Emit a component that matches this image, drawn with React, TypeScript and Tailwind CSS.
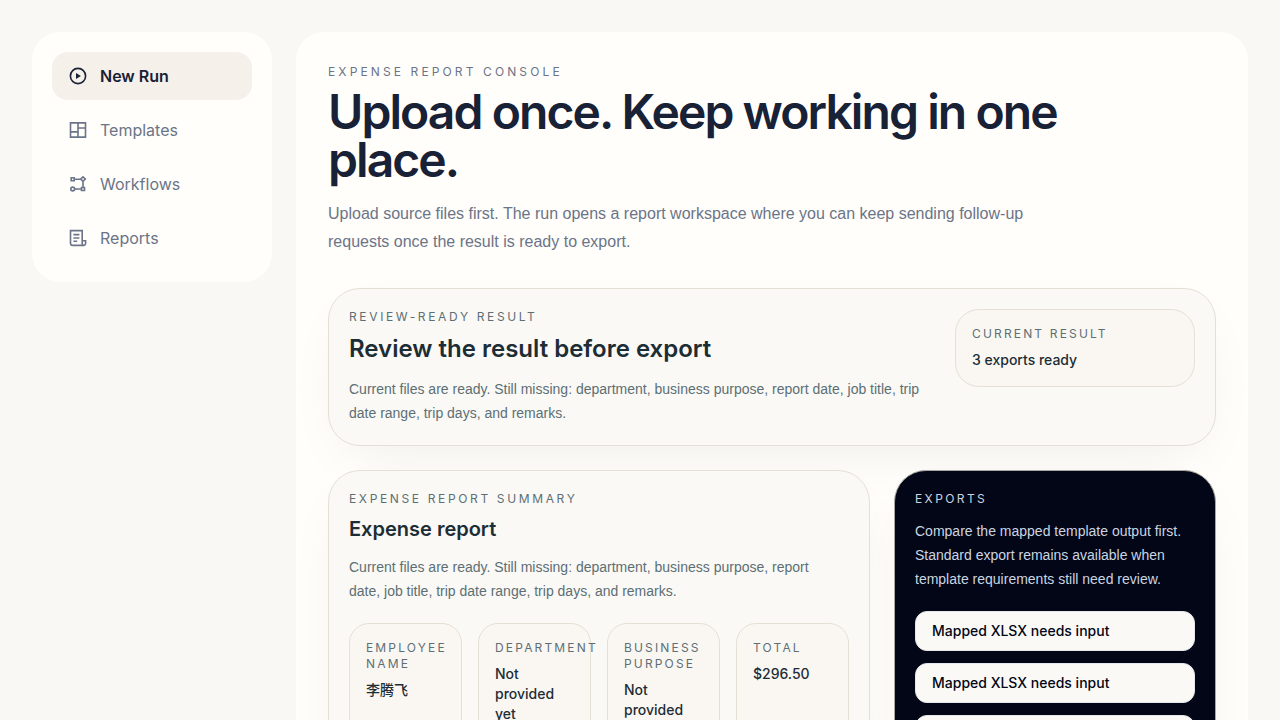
import type { ReactNode } from "react";
import clsx from "clsx";

const navItems = [
  { label: "New Run", icon: <RunIcon />, active: true },
  { label: "Templates", icon: <TemplatesIcon /> },
  { label: "Workflows", icon: <WorkflowsIcon /> },
  { label: "Reports", icon: <ReportsIcon /> },
];

const facts = [
  { label: "Employee name", value: "李腾飞" },
  { label: "Department", value: "Not provided yet" },
  { label: "Business purpose", value: "Not provided yet" },
  { label: "Total", value: "$296.50" },
];

const exportFiles = [
  { id: "xlsx-mapped", label: "Mapped XLSX needs input" },
  { id: "xlsx-template", label: "Mapped XLSX needs input" },
  { id: "xlsx-standard", label: "Standard XLSX" },
];

function Icon({ children }: { children: ReactNode }) {
  return (
    <svg viewBox="0 0 20 20" className="size-5 shrink-0" fill="none" stroke="currentColor" strokeWidth="1.6" aria-hidden="true">
      {children}
    </svg>
  );
}

function RunIcon() {
  return (
    <Icon>
      <circle cx="10" cy="10" r="7.6" />
      <path d="M8 6.9 12.9 10 8 13.1Z" fill="currentColor" stroke="none" />
    </Icon>
  );
}

function TemplatesIcon() {
  return (
    <Icon>
      <path d="M2.5 2.9h15v14.2h-15ZM10 2.9v14.2M10 8h7.5M2.5 11.9H10" />
    </Icon>
  );
}

function WorkflowsIcon() {
  return (
    <Icon>
      <path d="M3.2 3.7h3v3h-3ZM13.5 13.5h3v3h-3ZM15 2.8 17.3 5.1 15 7.4l-2.3-2.3ZM6.2 5.2h6.5M15 7.5v6M6.7 15h6.8" />
      <circle cx="4.7" cy="15" r="1.9" />
    </Icon>
  );
}

function ReportsIcon() {
  return (
    <Icon>
      <path d="M14.2 12.8V2.6H2.5v12.6a2.2 2.2 0 0 0 2.2 2.2h10.8M14.2 12.8h3.4v2.5a2 2 0 0 1-2 2.1 1.6 1.6 0 0 1-1.4-1.6ZM5.4 6.6h6M5.4 10h6M5.4 13.2h3.8" />
    </Icon>
  );
}

function Eyebrow({ children, className }: { children: ReactNode; className?: string }) {
  return <p className={clsx("text-xs uppercase", className)}>{children}</p>;
}

function Body({ children, className }: { children: ReactNode; className?: string }) {
  return <p className={clsx("font-['Liberation_Sans',sans-serif]", className)}>{children}</p>;
}

function Fact({ label, value, className }: { label: string; value: string; className?: string }) {
  return (
    <div className={clsx("border border-[#e5e0d6] bg-[#faf7f3] p-4", className)}>
      <Eyebrow className="tracking-[0.18em] text-[#5d6f74]">{label}</Eyebrow>
      <p className="mt-2 text-sm font-medium text-[#1d2d35]">{value}</p>
    </div>
  );
}

export default function App() {
  return (
    <div className="min-h-screen bg-[#f9f8f5] p-8 font-[Inter,'Noto_Sans_CJK_SC',sans-serif]">
      <div className="grid grid-cols-[240px_minmax(0,1fr)] items-start gap-6">
        <nav aria-label="Main" className="flex flex-col gap-1.5 rounded-[28px] bg-[#fffefa] p-5">
          {navItems.map((item) => (
            <a
              key={item.label}
              href="#"
              aria-current={item.active ? "page" : undefined}
              className={clsx(
                "flex h-12 items-center gap-3 rounded-2xl px-4 text-base",
                item.active ? "bg-[#f5f0e9] font-semibold text-[#182136]" : "text-[#6b7488]"
              )}
            >
              {item.icon}
              {item.label}
            </a>
          ))}
        </nav>

        <main className="rounded-[28px] bg-[#fffefa] p-8">
          <header className="max-w-3xl">
            <Eyebrow className="tracking-[0.26em] text-[#6b7488]">Expense report console</Eyebrow>
            <h1 className="mt-2 text-5xl leading-none font-semibold tracking-[-0.04em] text-[#182136]">
              Upload once. Keep working in one place.
            </h1>
            <Body className="mt-4 max-w-[720px] text-base leading-7 text-[#6b7488]">
              Upload source files first. The run opens a report workspace where you can keep sending follow-up requests once the result is ready to export.
            </Body>
          </header>

          <section className="mt-8 grid grid-cols-[minmax(0,1fr)_240px] items-start gap-4 rounded-[32px] border border-[#e5e0d6] bg-[#faf9f6] p-5 shadow-[0_20px_60px_-20px_rgba(28,26,22,0.08)]">
            <div>
              <Eyebrow className="tracking-[0.22em] text-[#5d6f74]">Review-ready result</Eyebrow>
              <h2 className="mt-2 text-2xl font-semibold text-[#1d2d35]">Review the result before export</h2>
              <Body className="mt-3 text-sm leading-6 text-[#5d6f74]">
                Current files are ready. Still missing: department, business purpose, report date, job title, trip date range, trip days, and remarks.
              </Body>
            </div>
            <Fact label="Current result" value="3 exports ready" className="rounded-3xl" />
          </section>

          <div className="mt-6 grid grid-cols-[minmax(0,1fr)_322px] items-start gap-6">
            <section className="rounded-[32px] border border-[#e5e0d6] bg-[#faf9f6] p-5 shadow-[0_20px_60px_-20px_rgba(28,26,22,0.08)]">
              <Eyebrow className="tracking-[0.22em] text-[#5d6f74]">Expense report summary</Eyebrow>
              <h2 className="mt-2 text-xl font-semibold text-[#1d2d35]">Expense report</h2>
              <Body className="mt-3 max-w-[480px] text-sm leading-6 text-[#5d6f74]">
                Current files are ready. Still missing: department, business purpose, report date, job title, trip date range, trip days, and remarks.
              </Body>
              <div className="mt-5 grid grid-cols-4 gap-4">
                {facts.map((fact) => (
                  <Fact key={fact.label} {...fact} className="rounded-[20px]" />
                ))}
              </div>
            </section>

            <aside className="rounded-[32px] border border-[#a9a79f] bg-[#020617] p-5 shadow-[0_20px_60px_-20px_rgba(28,26,22,0.08)]">
              <Eyebrow className="tracking-[0.2em] text-[#cbd5e1]">Exports</Eyebrow>
              <Body className="mt-3 text-sm leading-6 text-[#cbd5e1]">
                Compare the mapped template output first. Standard export remains available when template requirements still need review.
              </Body>
              <div className="mt-5 flex flex-col gap-3">
                {exportFiles.map((file) => (
                  <button
                    key={file.id}
                    type="button"
                    className="h-10 rounded-xl border border-[#e5e7eb] bg-[#faf9f6] px-4 text-left text-sm font-medium text-[#020617]"
                  >
                    {file.label}
                  </button>
                ))}
              </div>
            </aside>
          </div>
        </main>
      </div>
    </div>
  );
}
